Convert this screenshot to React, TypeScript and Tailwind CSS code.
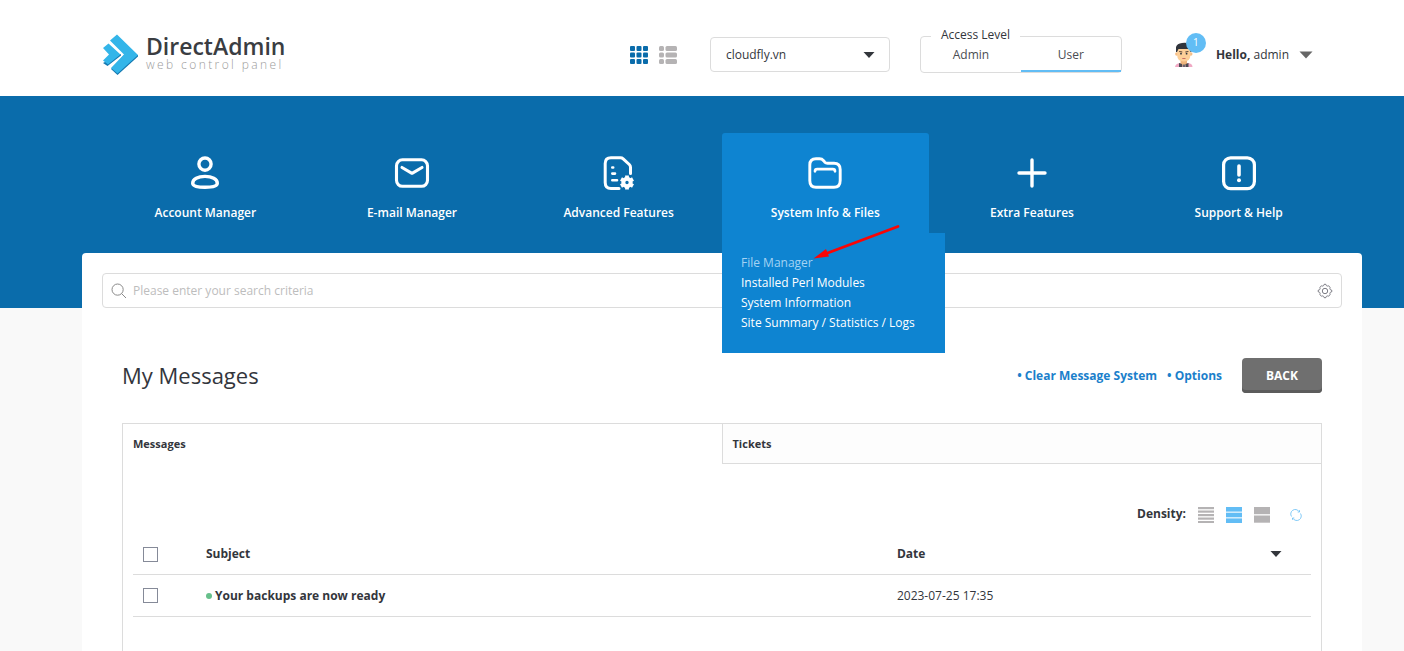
import React from "react";

const stroke = {
  fill: "none",
  stroke: "currentColor",
  strokeWidth: 3.4,
  strokeLinecap: "round" as const,
  strokeLinejoin: "round" as const,
};

function UserIcon() {
  return (
    <svg width="36" height="36" viewBox="0 0 36 36" {...stroke} aria-hidden="true">
      <circle cx="18" cy="9.1" r="6.1" />
      <path d="M5.700 28.300C5.700 24 11 21.400 18 21.400C25 21.400 30.300 24 30.300 28.300C30.300 31 25.500 32.300 18 32.300C10.500 32.300 5.700 31 5.700 28.300Z" />
    </svg>
  );
}

function MailIcon() {
  return (
    <svg width="36" height="36" viewBox="0 0 36 36" {...stroke} strokeWidth={3.1} aria-hidden="true">
      <rect x="2.500" y="4.800" width="31" height="26.500" rx="6" />
      <path d="M8 12.500L18 18.300L28 12.500" />
    </svg>
  );
}

function FeaturesIcon() {
  return (
    <svg width="36" height="36" viewBox="0 0 36 36" {...stroke} strokeWidth={3} aria-hidden="true">
      <path d="M18 33.500H10Q4.200 33.500 4.200 27.500V8.500Q4.200 2.700 10 2.700H19.500Q21 2.700 22.200 3.800L28.300 9.500Q29.500 10.700 29.500 12.300V18.500" />
      <path d="M11.300 12.500H12.200M11.300 18.600H14M11.300 25.300H16" strokeWidth={2.6} />
      <circle cx="26" cy="27.500" r="3.700" strokeWidth={4} />
      <path
        d="M26 23V20.500M26 34.500V32M30 25.200L32 24M20 31L22 29.800M30 29.800L32 31M20 24L22 25.200"
        strokeWidth={3.8}
        strokeLinecap="butt"
      />
    </svg>
  );
}

function FolderIcon() {
  return (
    <svg width="36" height="36" viewBox="0 0 36 36" {...stroke} strokeWidth={2.9} aria-hidden="true">
      <path d="M2.800 10Q2.800 3.800 9 3.800H12.500Q15 3.800 16.600 5.700L17.800 7.200Q18.800 8.200 20.500 8.200H27Q33.200 8.200 33.200 14.500V25.500Q33.200 32.300 27 32.300H9Q2.800 32.300 2.800 25.500Z" />
      <path d="M8 16.300Q8 14.200 10.200 14.200H25.800Q28 14.200 28 16.300" strokeWidth={2.7} />
    </svg>
  );
}

function PlusIcon() {
  return (
    <svg width="36" height="36" viewBox="0 0 36 36" {...stroke} aria-hidden="true">
      <path d="M18 5V31M5 18H31" />
    </svg>
  );
}

function HelpIcon() {
  return (
    <svg width="36" height="36" viewBox="0 0 36 36" {...stroke} strokeWidth={3.2} aria-hidden="true">
      <rect x="2.600" y="2.800" width="30.800" height="30.800" rx="7" />
      <path d="M18 11V20" strokeWidth={3.6} />
      <circle cx="18" cy="25.300" r="2" fill="currentColor" stroke="none" />
    </svg>
  );
}

function LogoMark() {
  return (
    <svg width="36" height="42" viewBox="0 0 36 42" aria-hidden="true">
      <path d="M15.500 41L9 35L22 21H36V22.500Z" fill="#1478b0" />
      <path d="M8 6.500L15 0.500L36 21L15.500 39.500L9 34L22 20.500Z" fill="#33b5e9" />
      <path d="M1 29L5.500 32L19 21.500V20Z" fill="#1478b0" />
      <path d="M1 14L6.500 9.500L18.500 20.500L6 30.500L1 26.500L7 20.500Z" fill="#33b5e9" />
    </svg>
  );
}

function Caret({ className }: { className: string }) {
  return (
    <svg width="14" height="8" viewBox="0 0 14 8" className={className} fill="currentColor" aria-hidden="true">
      <path d="M0.500 0.500H13.500L7 7.500Z" />
    </svg>
  );
}

function SmallCaret({ className }: { className: string }) {
  return (
    <svg width="12" height="6" viewBox="0 0 12 6" className={className} fill="currentColor" aria-hidden="true">
      <path d="M0.500 0H11.500L6 6Z" />
    </svg>
  );
}

function GridIcon() {
  const steps = [0, 6.5, 13];
  return (
    <svg width="18" height="18" viewBox="0 0 18 18" fill="currentColor" aria-hidden="true">
      {steps.map((y) => steps.map((x) => <rect key={`${x}-${y}`} x={x} y={y} width="5" height="5" rx="1" />))}
    </svg>
  );
}

function ListIcon() {
  return (
    <svg width="18" height="18" viewBox="0 0 18 18" fill="currentColor" aria-hidden="true">
      {[0, 6.5, 13].map((y) => (
        <g key={y}>
          <rect x="0" y={y} width="5" height="5" rx="1.500" />
          <rect x="6.500" y={y} width="11.500" height="5" rx="1.500" />
        </g>
      ))}
    </svg>
  );
}

function Avatar() {
  return (
    <svg width="20" height="26" viewBox="0 0 20 26" aria-hidden="true">
      <path d="M1 25Q1.500 21.500 6 21H14Q18.500 21.500 18.500 25Z" fill="#f0a9c4" />
      <path d="M6.500 17H13V22L9.800 25L6.500 22Z" fill="#f0b57c" />
      <path d="M5 21L8 22V25H5ZM14.500 21L11.500 22V25H14.500Z" fill="#4c4a52" />
      <path d="M8.600 22.500H11V25H8.600Z" fill="#6b6870" />
      <circle cx="2.800" cy="12" r="1.700" fill="#f5bd85" />
      <circle cx="16.800" cy="12" r="1.700" fill="#f5bd85" />
      <path d="M3.200 6H16.400V13Q16.400 19.500 9.800 19.500Q3.200 19.500 3.200 13Z" fill="#fdcf98" />
      <path d="M2 10V5Q3 1.500 8 1Q17.500 0 17.500 6V10H16.500L15.500 7H4.500L3 10Z" fill="#30343c" />
      <path d="M5.200 9.500L8.300 10M14.400 9.500L11.300 10" stroke="#574438" strokeWidth="1" />
      <circle cx="7" cy="11.700" r="0.900" fill="#30343c" />
      <circle cx="12.600" cy="11.700" r="0.900" fill="#30343c" />
      <path d="M8.300 16.500H11.500" stroke="#c96f63" strokeWidth="1" />
    </svg>
  );
}

function SearchIcon() {
  return (
    <svg width="16" height="16" viewBox="0 0 16 16" fill="none" stroke="#8a8a8a" strokeWidth="1" aria-hidden="true">
      <circle cx="6.600" cy="6.600" r="5.600" />
      <path d="M10.600 10.600L15 15" />
    </svg>
  );
}

function GearIcon() {
  return (
    <svg width="16" height="16" viewBox="0 0 16 16" fill="none" stroke="#7d7d85" strokeWidth="1" aria-hidden="true">
      <circle cx="8" cy="8" r="2.700" />
      <path d="M6.700 2.300Q6.700 1.200 8 1.200Q9.300 1.200 9.300 2.300Q9.500 3.100 10.300 3.100Q11.300 2.400 12.300 3.300Q13.500 4.300 12.900 5.400Q12.700 6.500 13.600 6.700Q14.900 6.700 14.900 8Q14.900 9.300 13.600 9.300Q12.700 9.500 12.900 10.600Q13.500 11.700 12.300 12.700Q11.300 13.600 10.300 12.900Q9.500 12.900 9.300 13.700Q9.300 14.800 8 14.800Q6.700 14.800 6.700 13.700Q6.500 12.900 5.700 12.900Q4.700 13.600 3.700 12.700Q2.500 11.700 3.100 10.600Q3.300 9.500 2.400 9.300Q1.100 9.300 1.100 8Q1.100 6.700 2.400 6.700Q3.300 6.500 3.100 5.400Q2.500 4.300 3.700 3.300Q4.700 2.400 5.700 3.100Q6.500 3.100 6.700 2.300Z" />
    </svg>
  );
}

function DensityIcon({ bars, size }: { bars: number[]; size: number }) {
  return (
    <svg width="16" height="16" viewBox="0 0 16 16" fill="currentColor" aria-hidden="true">
      {bars.map((y) => (
        <rect key={y} x="0" y={y} width="16" height={size} />
      ))}
    </svg>
  );
}

function RefreshIcon() {
  return (
    <svg width="12" height="12" viewBox="0 0 12 12" fill="none" stroke="currentColor" strokeWidth="0.8" aria-hidden="true">
      <path d="M1.500 7.500A4.500 4.500 0 0 1 9 2.500M10.500 4.500A4.500 4.500 0 0 1 3 9.500" />
      <path d="M9.500 1.200V3H7.700M2.500 10.800V9H4.300" />
    </svg>
  );
}

const navItems = [
  { label: "Account Manager", icon: <UserIcon /> },
  { label: "E-mail Manager", icon: <MailIcon /> },
  { label: "Advanced Features", icon: <FeaturesIcon /> },
  {
    label: "System Info & Files",
    icon: <FolderIcon />,
    menu: ["File Manager", "Installed Perl Modules", "System Information", "Site Summary / Statistics / Logs"],
  },
  { label: "Extra Features", icon: <PlusIcon /> },
  { label: "Support & Help", icon: <HelpIcon /> },
];

function Header() {
  return (
    <header className="flex h-24 items-center bg-white pt-[13px] pr-[91px] pl-[102px]">
      <a href="#" className="flex items-center gap-2">
        <LogoMark />
        <span className="flex flex-col pb-[3px]">
          <span className="text-[23px] leading-[23px] font-semibold text-[#3a3d42]">DirectAdmin</span>
          <span className="text-xs leading-[13px] font-light tracking-[0.2em] text-[#9a9a9a]">web control panel</span>
        </span>
      </a>
      <div className="ml-auto flex items-center">
        <div className="flex gap-[11px]">
          <button type="button" aria-label="Grid layout" className="text-[#0a6cab]">
            <GridIcon />
          </button>
          <button type="button" aria-label="List layout" className="text-[#b5b3b4]">
            <ListIcon />
          </button>
        </div>
        <div className="relative ml-[33px] w-[180px]">
          <select
            aria-label="Domain"
            className="h-[35px] w-full appearance-none rounded border border-[#dcdcdc] bg-white pr-8 pl-[15px] text-xs text-[#33363c]"
          >
            <option>cloudfly.vn</option>
          </select>
          <SmallCaret className="pointer-events-none absolute top-[15px] right-[15px] text-[#33363c]" />
        </div>
        <div
          role="group"
          aria-labelledby="access-level"
          className="relative ml-[30px] flex h-[37px] w-[202px] rounded border border-[#dcdcdc]"
        >
          <span id="access-level" className="absolute -top-[11px] left-[10px] bg-white px-[10px] text-xs leading-[18px]">
            Access Level
          </span>
          <button type="button" className="flex-1 text-xs text-[#4a4d52]">
            Admin
          </button>
          <button type="button" className="flex-1 border-b-2 border-[#62bdf5] pt-[2px] text-xs text-[#4a4d52]">
            User
          </button>
        </div>
        <button type="button" className="ml-[52px] flex items-center text-xs">
          <span className="relative flex w-[42px]">
            <Avatar />
            <span className="absolute -top-[9px] left-3 flex size-5 items-center justify-center rounded-full bg-[#62bdf5] text-[10px] text-white">
              1
            </span>
          </span>
          <span>
            <b>Hello,</b> admin
          </span>
          <Caret className="ml-[10px] text-[#666]" />
        </button>
      </div>
    </header>
  );
}

function Nav() {
  return (
    <nav className="bg-[#0a6cab] pt-[37px] pr-[62px] pb-[75px] pl-[102px]">
      <ul className="grid grid-cols-6">
        {navItems.map((item) => (
          <li key={item.label} className={item.menu ? "relative z-20 rounded-t-[3px] bg-[#0e84d1]" : "relative"}>
            <a href="#" className="flex h-[100px] flex-col items-center pt-[22px] text-white">
              {item.icon}
              <span className="mt-3 text-xs leading-5 font-semibold whitespace-nowrap">{item.label}</span>
            </a>
            {item.menu && (
              <>
                <ul className="absolute top-full left-0 bg-[#0e84d1] py-5 pr-[30px] pl-[19px] text-xs leading-5 whitespace-nowrap text-white">
                  {item.menu.map((entry, i) => (
                    <li key={entry}>
                      <a href="#" className={i === 0 ? "text-[#a4d3f3]" : "hover:text-[#a4d3f3]"}>
                        {entry}
                      </a>
                    </li>
                  ))}
                </ul>
                <svg width="90" height="40" viewBox="0 0 90 40" className="absolute top-[90px] left-[91px]" aria-hidden="true">
                  <path d="M12 31L85 3.500" stroke="#fb0505" strokeWidth="2.800" strokeLinecap="round" />
                  <path d="M0.500 35.500L13 26L16 33.500Z" fill="#fb0505" />
                </svg>
              </>
            )}
          </li>
        ))}
      </ul>
    </nav>
  );
}

function SearchBar() {
  return (
    <div className="flex h-[35px] items-center rounded border border-[#dcdcdc] px-2">
      <SearchIcon />
      <input
        type="text"
        aria-label="Search"
        placeholder="Please enter your search criteria"
        className="ml-1.5 flex-1 text-xs outline-none placeholder:text-[#bdbdbd]"
      />
      <button type="button" aria-label="Search options">
        <GearIcon />
      </button>
    </div>
  );
}

function Messages() {
  return (
    <section className="mt-[30px] flex flex-1 flex-col border border-b-0 border-[#dcdcdc]">
      <div role="tablist" className="flex text-[11px] font-bold">
        <button type="button" role="tab" aria-selected="true" className="h-10 flex-1 px-[10px] text-left">
          Messages
        </button>
        <button
          type="button"
          role="tab"
          aria-selected="false"
          className="h-10 flex-1 border-b border-l border-[#dcdcdc] bg-[#fdfdfd] px-[10px] pt-px text-left"
        >
          Tickets
        </button>
      </div>
      <div className="px-[10px] pt-[35px]">
        <div className="mb-1 flex h-[30px] items-center justify-end pr-[9px] text-xs">
          <span className="font-bold">Density:</span>
          <div className="ml-3 flex gap-3 pt-0.5">
            <button type="button" aria-label="Compact" className="text-[#b5b3b4]">
              <DensityIcon bars={[0, 3.5, 7, 10.5, 14]} size={2.2} />
            </button>
            <button type="button" aria-label="Comfortable" className="text-[#62bdf5]">
              <DensityIcon bars={[0, 5.7, 11.4]} size={4.6} />
            </button>
            <button type="button" aria-label="Spacious" className="text-[#b5b3b4]">
              <DensityIcon bars={[0, 8.5]} size={7.2} />
            </button>
          </div>
          <button type="button" aria-label="Refresh" className="ml-5 pt-0.5 text-[#62bdf5]">
            <RefreshIcon />
          </button>
        </div>
        <table className="w-full table-fixed border-collapse text-xs">
          <colgroup>
            <col className="w-[63px]" />
            <col />
            <col className="w-[36%]" />
          </colgroup>
          <thead>
            <tr className="h-[41px] border-b border-[#dcdcdc] text-left">
              <th className="pt-0.5 pl-[10px]">
                <input type="checkbox" aria-label="Select all" className="block size-[15px] appearance-none border border-[#858a98]" />
              </th>
              <th className="px-[10px] pt-0.5 font-bold">Subject</th>
              <th className="px-[10px] pt-0.5 font-bold">
                <button type="button" className="flex w-full items-center justify-between pr-[19px]">
                  Date
                  <SmallCaret className="text-[#33363c]" />
                </button>
              </th>
            </tr>
          </thead>
          <tbody>
            <tr className="h-[42px] border-b border-[#dcdcdc]">
              <td className="pl-[10px]">
                <input
                  type="checkbox"
                  aria-label="Select message"
                  className="block size-[15px] appearance-none border border-[#858a98]"
                />
              </td>
              <td className="px-[10px] pt-0.5 font-bold">
                <a href="#" className="flex items-center gap-[3px]">
                  <span className="size-1.5 rounded-full bg-[#67c08b]" />
                  Your backups are now ready
                </a>
              </td>
              <td className="px-[10px] pt-0.5">2023-07-25 17:35</td>
            </tr>
          </tbody>
        </table>
      </div>
    </section>
  );
}

export default function App() {
  return (
    <div className="flex min-h-screen flex-col bg-[#f9f9f9] font-['Open_Sans',sans-serif] text-[#33363c]">
      <Header />
      <Nav />
      <main className="relative z-10 -mt-[55px] mr-[42px] ml-[82px] flex flex-1 flex-col rounded-t bg-white p-5 pb-0">
        <SearchBar />
        <div className="flex flex-1 flex-col px-5 pt-[50px]">
          <div className="flex items-center">
            <h1 className="mr-auto text-[22px] leading-[35px] font-medium">My Messages</h1>
            <div className="flex gap-[10px] text-xs font-bold text-[#1b7fcb]">
              <a href="#">• Clear Message System</a>
              <a href="#">• Options</a>
            </div>
            <button
              type="button"
              className="ml-5 h-[35px] w-20 rounded bg-[#6f6f6f] text-xs font-bold text-white shadow-[inset_0_-3px_0_#5c5c5c]"
            >
              BACK
            </button>
          </div>
          <Messages />
        </div>
      </main>
    </div>
  );
}
